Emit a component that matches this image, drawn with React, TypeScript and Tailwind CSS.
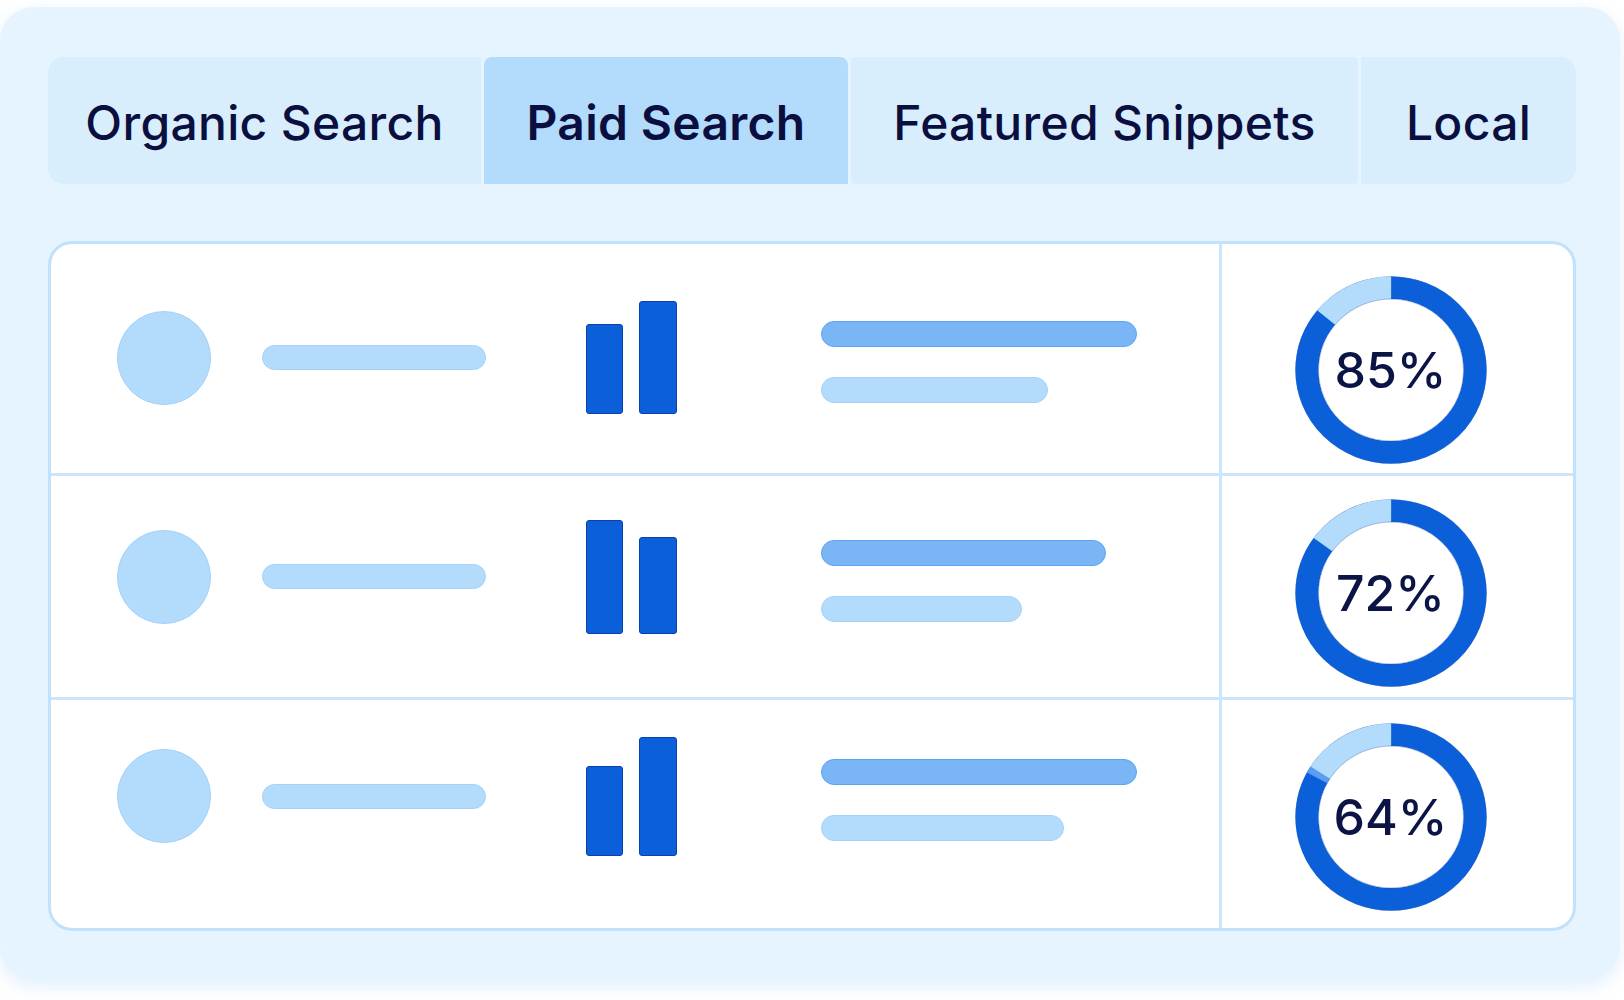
import React from "react";

const FONT = { fontFamily: "Inter, 'Noto Sans', 'Liberation Sans', sans-serif" };

const tabs = [
  { label: "Organic Search", w: "w-[433px]", active: false, round: "rounded-l-[16px]" },
  { label: "Paid Search", w: "w-[364px]", active: true, round: "rounded-t-[8px]" },
  { label: "Featured Snippets", w: "w-[507px]", active: false, round: "rounded-[4px]" },
  { label: "Local", w: "flex-1", active: false, round: "rounded-r-[16px]" },
];

type Row = {
  height: string;
  shift: string;
  donutPad: string;
  bars: [number, number];
  lines: [number, number];
  value: number;
  light: number;
  accent?: boolean;
};

const rows: Row[] = [
  { height: "h-[232px] border-b-[3px]", shift: "pb-[2px]", donutPad: "pt-[22px]", bars: [90, 113], lines: [316, 227], value: 85, light: 0.14 },
  { height: "h-[224px] border-b-[3px]", shift: "pb-[20px]", donutPad: "pt-[12px]", bars: [114, 97], lines: [285, 201], value: 72, light: 0.15 },
  { height: "flex-1", shift: "pb-[36px]", donutPad: "pt-[6px]", bars: [90, 119], lines: [316, 243], value: 64, light: 0.16, accent: true },
];

function Donut({ value, light, accent }: { value: number; light: number; accent?: boolean }) {
  const r = 84;
  const c = 2 * Math.PI * r;
  const dark = 1 - light;
  return (
    <div className="relative w-[192px] h-[188px]">
      <svg width="192" height="188" viewBox="0 0 192 192" preserveAspectRatio="none" className="absolute inset-0">
        <circle cx="96" cy="96" r="95" fill="none" stroke="#0a3a9c" strokeWidth="1.5" opacity="0.55" />
        <circle
          cx="96"
          cy="96"
          r={r}
          fill="none"
          stroke="#0b60d9"
          strokeWidth="23"
          strokeDasharray={`${c * dark} ${c}`}
          transform="rotate(-90 96 96)"
        />
        <circle
          cx="96"
          cy="96"
          r={r}
          fill="none"
          stroke="#b3dcfc"
          strokeWidth="23"
          strokeDasharray={`${c * light} ${c}`}
          transform={`rotate(${-90 - light * 360} 96 96)`}
        />
        {accent && (
          <circle
            cx="96"
            cy="96"
            r={r}
            fill="none"
            stroke="#5b9df2"
            strokeWidth="23"
            strokeDasharray={`${c * 0.012} ${c}`}
            transform={`rotate(${-90 - light * 360 - 4} 96 96)`}
          />
        )}
        <circle cx="96" cy="96" r="72.5" fill="#ffffff" stroke="#0a3a9c" strokeWidth="1" strokeOpacity="0.35" />
      </svg>
      <div className="absolute inset-0 flex items-center justify-center">
        <span className="text-[50px] font-medium text-[#0c1445] leading-none" style={FONT}>
          {value}%
        </span>
      </div>
    </div>
  );
}

export default function App() {
  return (
    <div className="w-[1624px] h-[1000px] bg-white pt-[7px]" style={FONT}>
      <div className="w-[1620px] h-[973px] bg-[#e5f4fe] rounded-[34px] pl-[48px] pr-[44px] pt-[50px] shadow-[0_6px_18px_rgba(170,210,245,0.35)]">
        {/* Tabs */}
        <div className="flex gap-[3px] h-[127px]">
          {tabs.map((t) => (
            <div
              key={t.label}
              className={`${t.w} ${t.round} flex items-center justify-center pt-[4px] ${
                t.active ? "bg-[#b3dcfc] font-semibold" : "bg-[#d8eefd] font-medium"
              }`}
            >
              <span className="text-[48px] text-[#0b0f3f] tracking-[0.3px] leading-none">{t.label}</span>
            </div>
          ))}
        </div>

        {/* Table card */}
        <div className="mt-[57px] h-[690px] bg-white border-[3px] border-[#c2e1fb] rounded-[24px] flex flex-col overflow-hidden">
          {rows.map((row) => (
            <div key={row.value} className={`${row.height} border-[#cae6fc] flex`}>
              <div className={`w-[1168px] flex items-center pl-[66px] ${row.shift}`}>
                <div className="w-[94px] h-[94px] rounded-full bg-[#b3dcfc] border border-[#a4d2fa]" />
                <div className="ml-[51px] w-[224px] h-[25px] rounded-full bg-[#b3dcfc] border border-[#a4d2fa]" />
                <div className="ml-[100px] flex items-end gap-[16px]">
                  <div
                    className="w-[37px] rounded-[3px] bg-[#0b60d9] border border-[#0a3fb0]"
                    style={{ height: row.bars[0] }}
                  />
                  <div
                    className="w-[38px] rounded-[3px] bg-[#0b60d9] border border-[#0a3fb0]"
                    style={{ height: row.bars[1] }}
                  />
                </div>
                <div className="ml-[144px] flex flex-col gap-[30px] pt-[8px]">
                  <div
                    className="h-[26px] rounded-full bg-[#7ab6f6] border border-[#5ea3f3]"
                    style={{ width: row.lines[0] }}
                  />
                  <div
                    className="h-[26px] rounded-full bg-[#b3dcfc] border border-[#a4d2fa]"
                    style={{ width: row.lines[1] }}
                  />
                </div>
              </div>
              <div className={`flex-1 border-l-[3px] border-[#cae6fc] flex items-center justify-center pr-[14px] ${row.donutPad}`}>
                <Donut value={row.value} light={row.light} accent={row.accent} />
              </div>
            </div>
          ))}
        </div>
      </div>
    </div>
  );
}
